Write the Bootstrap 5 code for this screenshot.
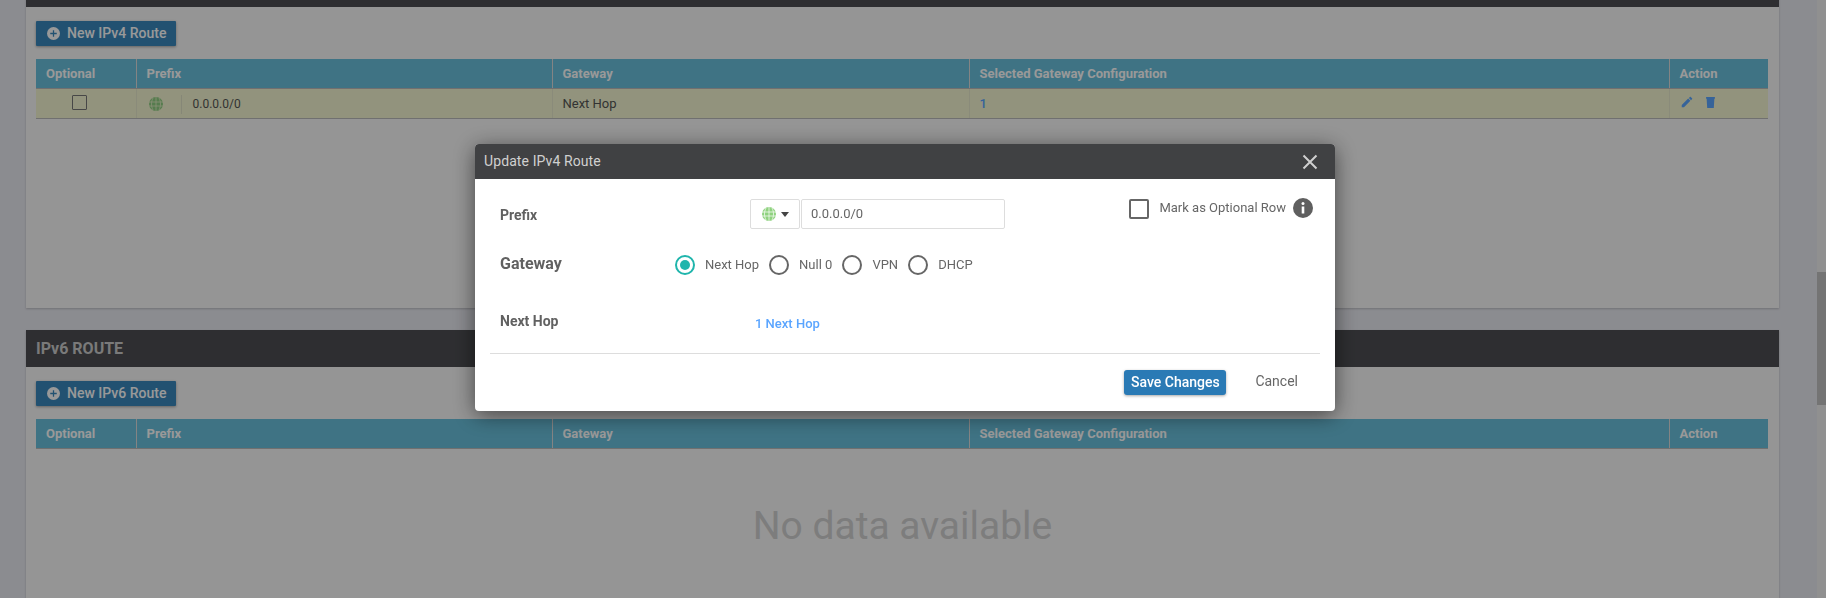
<!DOCTYPE html>
<html lang="en">
<head>
    <meta charset="UTF-8">
    <title>Update IPv4 Route</title>
    <link href="https://cdn.jsdelivr.net/npm/bootstrap@5.3.0/dist/css/bootstrap.min.css" rel="stylesheet">
    <script src="https://cdn.jsdelivr.net/npm/bootstrap@5.3.0/dist/js/bootstrap.bundle.min.js"></script>
    <style>
        html, body { height: 598px; overflow: hidden; }
        body { background: #e8e9f0; font-family: Roboto, "Liberation Sans", sans-serif; font-size: 13px; color: #555; padding: 0 47px 0 26px; }
        .section-panel { background: #f9f9f9; box-shadow: 0 1px 2px rgba(0,0,0,.2); }
        .first-panel { height: 338px; margin-top: -30px; }
        .second-panel { margin-top: 22px; height: 268px; overflow: hidden; }
        .panel-head { height: 37px; background: #4d4e52; color: #ccc; font-size: 16px; font-weight: 700; padding: 0 10px; }
        .panel-body-inner { padding: 14px 10px 0; }
        .add-btn { height: 25px; width: 140px; padding: 0 0 0 11px; background: #3a88bd; color: #fff; border: 0; border-radius: 1px; font-size: 14px; font-weight: 500; box-shadow: 0 1px 3px rgba(0,0,0,.35); gap: 7px; }
        .route-table { width: 1732px; margin: 13px 0 0; table-layout: fixed; border-collapse: collapse; }
        .route-table th { height: 29px; background: #69c0dc; color: #fff; font-weight: 700; font-size: 13px; padding: 0 10px; border-right: 1px solid #ddd; border-bottom: 1px solid #bbb; }
        .route-table td { height: 30px; background: #f3f5d0; color: #555; padding: 2px 10px 0; border-right: 1px solid #e6e8cc; border-bottom: 1px solid #bbb; vertical-align: middle; }
        .route-table .col-end { border-right: 0; }
        .row-check { display: block; width: 15px; height: 15px; border: 1px solid #777; border-radius: 1px; margin: 0 0 3px 26px; }
        .globe-cell { margin-left: 2px; }
        .prefix-sep { border-left: 1px solid #e0e2c6; height: 19px; padding-left: 11px; line-height: 19px; margin-left: 18px; font-size: 12px; }
        .gw-link { color: #5aa5ff; font-weight: 500; }
        .action-icons { gap: 12px; margin-bottom: 4px; }
        .no-data { font-size: 39px; color: #d0d0d0; text-align: center; margin-top: 48px; }
        .scroll-track { position: fixed; right: 0; top: 0; bottom: 0; width: 9px; background: #f1f1f1; }
        .scroll-thumb { position: fixed; right: 0; top: 272px; width: 9px; height: 133px; background: #c1c1c1; }
        .dim-layer { position: fixed; inset: 0; background: rgba(0,0,0,.4); }
        .route-modal { position: fixed; left: 475px; top: 144px; width: 860px; height: 267px; background: #fff; border-radius: 4px; box-shadow: 0 4px 22px rgba(0,0,0,.55); }
        .route-modal-head { height: 35px; background: #404143; color: #d0d0d0; font-size: 14px; letter-spacing: .1px; padding: 0 9px; border-radius: 4px 4px 0 0; }
        .close-x { width: 16px; height: 16px; margin-right: 8px; }
        .route-modal-body { padding: 0 15px; }
        .form-line { padding: 0 10px; }
        .line-prefix { height: 76px; padding-top: 20px; }
        .line-label { width: 167px; font-size: 14px; font-weight: 700; color: #616161; line-height: 20px; }
        .prefix-label { line-height: 32px; }
        .prefix-group { width: 255px; margin-left: 83px; height: 30px; gap: 1px; }
        .prefix-drop { width: 50px; height: 30px; border: 1px solid #ddd; border-radius: 2px; gap: 5px; padding-left: 1px; }
        .prefix-input { flex: 1; height: 30px; border: 1px solid #ddd; border-radius: 2px; padding: 0 9px; line-height: 28px; color: #666; }
        .caret-down { width: 0; height: 0; border: 4px solid transparent; border-top: 5px solid #444; border-bottom: 0; }
        .optional-box { margin-left: auto; margin-right: -3px; color: #666; }
        .big-check { width: 20px; height: 20px; border: 2px solid #666; border-radius: 2px; margin-right: 10px; }
        .optional-text { margin-top: -3px; }
        .info-dot { width: 20px; height: 20px; margin-left: 7px; margin-top: -2px; }
        .line-gateway { height: 45px; }
        .gateway-label { font-size: 16px; width: 175px; margin-top: -1px; }
        .radio-dot { width: 20px; height: 20px; border: 2px solid #666; border-radius: 50%; margin-right: 10px; }
        .radio-on { border-color: #1fb5ac; padding: 3px; }
        .radio-on span { display: block; width: 10px; height: 10px; background: #1fb5ac; border-radius: 50%; }
        .radio-text { margin-right: 10px; color: #666; }
        .line-hop { height: 53px; padding-top: 11px; }
        .hop-link { color: #5aa5ff; font-weight: 500; margin-left: 88px; margin-top: 3px; }
        .modal-rule { border-top: 1px solid #ddd; }
        .modal-actions { padding: 16px 22px 0 0; }
        .save-btn { width: 102px; height: 25px; padding: 0; border: 0; border-radius: 3px; background: #2a7ab5; color: #fff; font-size: 14px; font-weight: 500; box-shadow: 0 1px 3px rgba(0,0,0,.35); }
        .cancel-btn { color: #666; font-size: 14px; margin-left: 29px; margin-top: -2px; }
    </style>
</head>
<body>
    <div class="section-panel first-panel">
        <div class="panel-head"></div>
        <div class="panel-body-inner">
            <button class="add-btn d-flex align-items-center" type="button">
                <svg width="13" height="13" viewBox="0 0 12 12"><circle cx="6" cy="6" r="6" fill="#fff"/><path d="M6 3v6M3 6h6" stroke="#3a88bd" stroke-width="1.2"/></svg>
                New IPv4 Route
            </button>
            <table class="route-table">
                <colgroup><col style="width:100px"><col style="width:416px"><col style="width:417px"><col style="width:700px"><col style="width:99px"></colgroup>
                <tr><th>Optional</th><th>Prefix</th><th>Gateway</th><th>Selected Gateway Configuration</th><th class="col-end">Action</th></tr>
                <tr>
                    <td><span class="row-check"></span></td>
                    <td><div class="d-flex align-items-center globe-cell">
                        <svg width="14" height="14" viewBox="0 0 14 14"><circle cx="7" cy="7" r="7" fill="#8fcf83"/><path d="M0 5h14M0 9h14M7 0v14M4 1c-2 4-2 8 0 12M10 1c2 4 2 8 0 12" stroke="#f3f5d0" stroke-width=".7" fill="none"/></svg>
                        <span class="prefix-sep">0.0.0.0/0</span>
                    </div></td>
                    <td>Next Hop</td>
                    <td><span class="gw-link">1</span></td>
                    <td class="col-end"><div class="d-flex align-items-center action-icons">
                        <svg width="14" height="14" viewBox="0 0 24 24"><path fill="#5aa5ff" d="M3 17.2V21h3.800L17.800 10l-3.800-3.800L3 17.200zM20.700 7c.4-.4.4-1 0-1.400l-2.300-2.300c-.4-.4-1-.4-1.400 0l-1.800 1.800 3.800 3.800L20.700 7z"/></svg>
                        <svg width="9" height="11" viewBox="0 0 8 10"><path fill="#5aa5ff" d="M0 0h8v1.500H7.500L7 10H1L.5 1.500H0z"/></svg>
                    </div></td>
                </tr>
            </table>
        </div>
    </div>

    <div class="section-panel second-panel">
        <div class="panel-head d-flex align-items-center">IPv6 ROUTE</div>
        <div class="panel-body-inner">
            <button class="add-btn d-flex align-items-center" type="button">
                <svg width="13" height="13" viewBox="0 0 12 12"><circle cx="6" cy="6" r="6" fill="#fff"/><path d="M6 3v6M3 6h6" stroke="#3a88bd" stroke-width="1.2"/></svg>
                New IPv6 Route
            </button>
            <table class="route-table">
                <colgroup><col style="width:100px"><col style="width:416px"><col style="width:417px"><col style="width:700px"><col style="width:99px"></colgroup>
                <tr><th>Optional</th><th>Prefix</th><th>Gateway</th><th>Selected Gateway Configuration</th><th class="col-end">Action</th></tr>
            </table>
            <div class="no-data">No data available</div>
        </div>
    </div>

    <div class="scroll-track"></div>
    <div class="scroll-thumb"></div>
    <div class="dim-layer"></div>

    <div class="route-modal">
        <div class="route-modal-head d-flex align-items-center justify-content-between">
            <span>Update IPv4 Route</span>
            <svg class="close-x" viewBox="0 0 16 16"><path d="M1.500 1.500l13 13M14.500 1.500l-13 13" stroke="#d0d0d0" stroke-width="2"/></svg>
        </div>
        <div class="route-modal-body">
            <div class="form-line line-prefix d-flex">
                <div class="line-label prefix-label">Prefix</div>
                <div class="prefix-group d-flex">
                    <div class="prefix-drop d-flex align-items-center justify-content-center">
                        <svg width="14" height="14" viewBox="0 0 14 14"><circle cx="7" cy="7" r="7" fill="#8fd27f"/><path d="M0 5h14M0 9h14M7 0v14M4 1c-2 4-2 8 0 12M10 1c2 4 2 8 0 12" stroke="#fff" stroke-width=".7" fill="none"/></svg>
                        <span class="caret-down"></span>
                    </div>
                    <div class="prefix-input">0.0.0.0/0</div>
                </div>
                <div class="optional-box d-flex align-items-center align-self-start">
                    <span class="big-check"></span>
                    <span class="optional-text">Mark as Optional Row</span>
                    <svg class="info-dot" viewBox="0 0 20 20"><circle cx="10" cy="10" r="10" fill="#5f5f5f"/><circle cx="10" cy="5.500" r="1.500" fill="#fff"/><rect x="8.700" y="8.500" width="2.600" height="7" fill="#fff"/></svg>
                </div>
            </div>
            <div class="form-line line-gateway d-flex">
                <div class="line-label gateway-label">Gateway</div>
                <div class="d-flex align-items-center align-self-start">
                    <span class="radio-dot radio-on"><span></span></span><span class="radio-text">Next Hop</span>
                    <span class="radio-dot"></span><span class="radio-text">Null 0</span>
                    <span class="radio-dot"></span><span class="radio-text">VPN</span>
                    <span class="radio-dot"></span><span class="radio-text">DHCP</span>
                </div>
            </div>
            <div class="form-line line-hop d-flex">
                <div class="line-label">Next Hop</div>
                <div class="hop-link">1 Next Hop</div>
            </div>
            <div class="modal-rule"></div>
            <div class="modal-actions d-flex justify-content-end align-items-center">
                <button class="save-btn" type="button">Save Changes</button>
                <span class="cancel-btn">Cancel</span>
            </div>
        </div>
    </div>
</body>
</html>
